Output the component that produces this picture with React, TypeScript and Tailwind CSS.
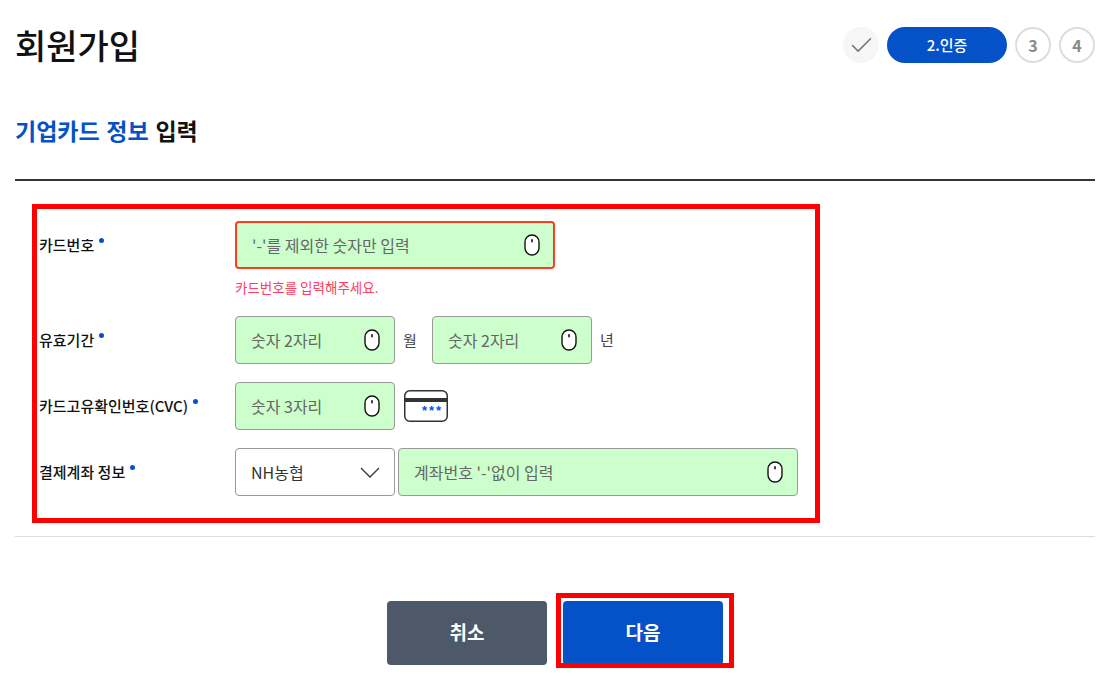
import React from 'react';
import { Check } from 'lucide-react';

const MouseIcon = () => (
  <svg width="16" height="22" viewBox="0 0 16 22" className="shrink-0">
    <rect x="1" y="1" width="14" height="20" rx="7" fill="#fff" stroke="#111" strokeWidth="1.4" />
    <rect x="7.2" y="5" width="1.6" height="3.6" rx="0.8" fill="#111" />
  </svg>
);

const CardIcon = () => (
  <svg width="44" height="32" viewBox="0 0 44 32" className="ml-[9px]">
    <rect x="0.75" y="0.75" width="42.5" height="30.5" rx="5" fill="#fff" stroke="#333" strokeWidth="1.5" />
    <rect x="1" y="8" width="42" height="4" fill="#333" />
    <text x="18" y="25" fontSize="13" fontWeight="700" fill="#0451e8" fontFamily="Liberation Sans, sans-serif" letterSpacing="2">***</text>
  </svg>
);

const Field = ({ placeholder, className, invalid }: { placeholder: string; className: string; invalid?: boolean }) => (
  <div
    className={`flex items-center justify-between h-[48px] bg-[#ccffcc] rounded-[4px] pl-[15px] ${invalid ? 'pr-[13px] border-2 border-[#ff3c1e]' : 'pr-[14px] border border-[#999999]'} ${className}`}
  >
    <input
      readOnly
      placeholder={placeholder}
      className="w-full min-w-0 bg-transparent outline-none text-[16px] placeholder:text-[#666666]"
    />
    <MouseIcon />
  </div>
);

const Label = ({ children }: { children: React.ReactNode }) => (
  <div className="w-[196px] shrink-0 flex items-start text-[15px] font-medium text-[#111111] leading-[22px]">
    <span>{children}</span>
    <span className="w-[5px] h-[5px] rounded-full bg-[#0451c8] mt-[4px] ml-[5px]" />
  </div>
);

export default function App() {
  return (
    <div
      className="relative w-[1106px] h-[680px] overflow-hidden bg-white pl-[15px] pr-[11px] pt-[27px]"
      style={{ fontFamily: '"Noto Sans CJK KR", "Noto Sans", sans-serif' }}
    >
      <header className="flex items-center justify-between h-[36px]">
        <h1 className="text-[34px] font-medium text-[#111111] leading-[36px]">회원가입</h1>
        <ol className="flex items-center gap-[8px]">
          <li className="w-[36px] h-[36px] rounded-full bg-[#f6f6f6] flex items-center justify-center">
            <Check className="w-[27px] h-[27px] text-[#777777]" strokeWidth={1.4} />
          </li>
          <li className="w-[120px] h-[36px] rounded-full bg-[#0451c8] text-white text-[15px] font-medium flex items-center justify-center">
            2.인증
          </li>
          <li className="w-[36px] h-[36px] rounded-full border-2 border-[#dddddd] text-[#888888] text-[16px] font-bold flex items-center justify-center">
            3
          </li>
          <li className="w-[36px] h-[36px] rounded-full border-2 border-[#dddddd] text-[#888888] text-[16px] font-bold flex items-center justify-center">
            4
          </li>
        </ol>
      </header>

      <h2 className="mt-[51px] text-[23px] font-bold leading-[32px] text-[#111111] pb-[33px] border-b-2 border-[#333333] [word-spacing:1.5px]">
        <span className="text-[#0451c8]">기업카드 정보</span> 입력
      </h2>

      <form className="mt-[40px] pl-[24px] pb-[40px] border-b border-[#dddddd]">
        <div className="flex items-start">
          <div className="pt-[13px]">
            <Label>카드번호</Label>
          </div>
          <div>
            <Field placeholder="'-'를 제외한 숫자만 입력" className="w-[320px]" invalid />
            <p className="mt-[8px] text-[13.5px] leading-[20px] text-[#ff4060]">카드번호를 입력해주세요.</p>
          </div>
        </div>

        <div className="flex items-center mt-[19px]">
          <Label>유효기간</Label>
          <Field placeholder="숫자 2자리" className="w-[160px]" />
          <span className="w-[37px] pl-[8px] text-[15px] text-[#444444]">월</span>
          <Field placeholder="숫자 2자리" className="w-[160px]" />
          <span className="pl-[8px] text-[15px] text-[#444444]">년</span>
        </div>

        <div className="flex items-center mt-[18px]">
          <Label>카드고유확인번호(CVC)</Label>
          <Field placeholder="숫자 3자리" className="w-[160px]" />
          <CardIcon />
        </div>

        <div className="flex items-center mt-[18px]">
          <Label>결제계좌 정보</Label>
          <div className="w-[160px] h-[48px] flex items-center justify-between border border-[#999999] rounded-[4px] pl-[15px] pr-[14px] text-[16px] text-[#333333]">
            NH농협
            <svg width="20" height="11" viewBox="0 0 20 11" fill="none" stroke="#333" strokeWidth="1.3">
              <path d="M1 1l9 9 9-9" />
            </svg>
          </div>
          <Field placeholder="계좌번호 '-'없이 입력" className="w-[400px] ml-[3px]" />
        </div>
      </form>

      <div className="mt-[64px] flex justify-center gap-[16px]">
        <button className="w-[160px] h-[64px] pb-[2px] rounded-[4px] bg-[#4d5868] text-white text-[19px] font-bold">취소</button>
        <button className="w-[160px] h-[64px] pb-[2px] rounded-[4px] bg-[#0451c8] text-white text-[19px] font-bold">다음</button>
      </div>

      {/* red annotation frames */}
      <div className="absolute left-[32px] top-[204px] w-[788px] h-[319px] border-[5px] border-[#ff0000] pointer-events-none" />
      <div className="absolute left-[556px] top-[593px] w-[178px] h-[75px] border-[5px] border-[#ff0000] pointer-events-none" />
    </div>
  );
}
